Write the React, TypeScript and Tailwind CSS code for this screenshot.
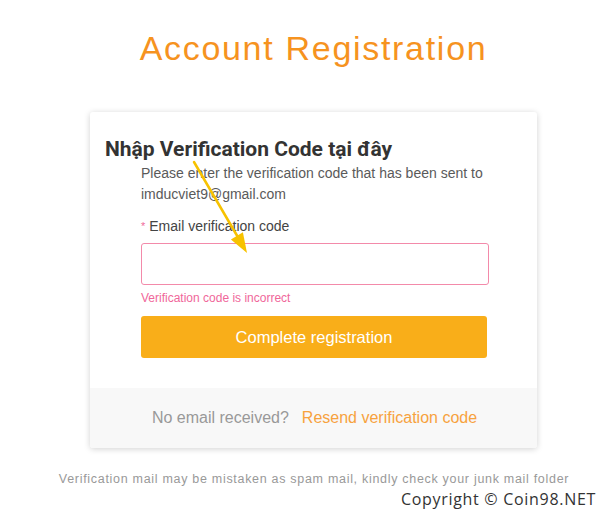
import React from "react";

export default function App() {
  return (
    <div className="w-[610px] h-[511px] bg-white overflow-hidden relative" style={{ fontFamily: '"Liberation Sans", Arial, sans-serif' }}>
      <div className="flex flex-col">
        <h1 className="pt-[28px] ml-[90px] w-[447px] text-center text-[34px] leading-[40px] text-[#f6931f] tracking-[1.7px] whitespace-nowrap">
          Account Registration
        </h1>
        <div className="relative mt-[44px] ml-[90px] w-[447px] bg-white rounded-[3px] shadow-[0_1px_6px_rgba(0,0,0,0.18)]">
          <div className="pt-[51px] pl-[51px] pr-[48px] pb-[30px]">
            <p className="text-[14px] leading-[21px] text-[#5a5a5a] whitespace-nowrap">
              Please enter the verification code that has been sent to
              <br />
              imducviet9@gmail.com
            </p>
            <div className="mt-[11px] text-[14px] leading-[20px] text-[#444] flex items-center">
              <span className="text-[#f06b9a] text-[11px] mr-[4px]">*</span>
              Email verification code
            </div>
            <div className="mt-[7px] h-[42px] border border-[#f38aaa] rounded-[3px] bg-white"></div>
            <div className="mt-[5px] text-[12px] leading-[16px] text-[#f0679a]">Verification code is incorrect</div>
            <button className="mt-[10px] w-[346px] h-[42px] bg-[#f9ae19] rounded-[3px] text-white text-[16.5px] flex items-center justify-center">
              Complete registration
            </button>
          </div>
          <div className="h-[60px] bg-[#f8f8f8] rounded-b-[3px] flex items-center justify-center text-[16px] pl-[2px]">
            <span className="text-[#999]">No email received?</span>
            <span className="ml-[13px] text-[#f7a23e]">Resend verification code</span>
          </div>
          <div
            className="absolute left-[15px] top-[25px] text-[21px] leading-[25px] font-bold text-[#333] whitespace-nowrap"
            style={{ fontFamily: 'Roboto, "Noto Sans", sans-serif' }}
          >
            Nhập Verification Code tại đây
          </div>
          <svg className="absolute left-0 top-0 pointer-events-none" width="447" height="160" viewBox="0 0 447 160">
            <line x1="104" y1="50" x2="149" y2="127" stroke="#f7c200" strokeWidth="2.5" strokeLinecap="round" />
            <polygon points="157,141 152.9,120.3 140.9,127.4" fill="#f7c200" />
          </svg>
        </div>
        <p className="mt-[23px] ml-[40px] w-[548px] text-center text-[12.5px] leading-[16px] tracking-[0.7px] text-[#999] whitespace-nowrap">
          Verification mail may be mistaken as spam mail, kindly check your junk mail folder
        </p>
        <div
          className="mt-[2px] pr-[14px] self-end text-[16px] leading-[20px] tracking-[0.7px] text-[#333]"
          style={{ fontFamily: '"Open Sans", sans-serif' }}
        >
          Copyright © Coin98.NET
        </div>
      </div>
    </div>
  );
}
